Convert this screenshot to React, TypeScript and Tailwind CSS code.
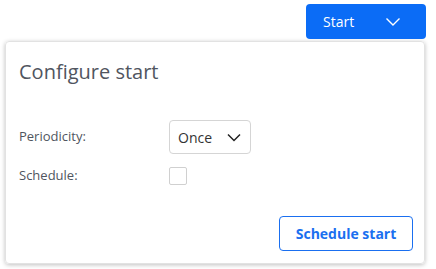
import React from "react";

export default function App() {
  return (
    <div className="w-[436px] h-[269px] bg-white relative" style={{ fontFamily: '"Open Sans", sans-serif' }}>
      <div className="flex justify-end pr-[10px] pt-[4px]">
        <button className="w-[120px] h-[35px] bg-[#0b6cf6] rounded-[4px] text-white text-[14px] flex items-center pl-[17px]">
          <span>Start</span>
          <svg className="ml-[31px]" width="16" height="10" viewBox="0 0 16 10" fill="none">
            <path d="M1.5 1.5 L8 8 L14.5 1.5" stroke="white" strokeWidth="1.4" />
          </svg>
        </button>
      </div>
      <div className="ml-[5px] mt-[2px] w-[420px] h-[223px] border border-[#e2e2e2] rounded-[4px] shadow-[0_1px_4px_rgba(0,0,0,0.25)] flex flex-col pl-[13px] pr-[11px]">
        <div className="text-[20px] text-[#505560] mt-[16px] leading-[28px]">Configure start</div>
        <div className="mt-[34px] flex items-center">
          <div className="w-[150px] text-[13px] text-[#505560]">Periodicity:</div>
          <div className="w-[82px] h-[34px] border border-[#d5d5d5] rounded-[4px] flex items-center pl-[8px] text-[14px] text-[#333]">
            <span>Once</span>
            <svg className="ml-[15px]" width="14" height="9" viewBox="0 0 14 9" fill="none">
              <path d="M1 1.5 L7 7.5 L13 1.5" stroke="#222" strokeWidth="1.5" />
            </svg>
          </div>
        </div>
        <div className="mt-[12px] flex items-center">
          <div className="w-[150px] text-[13px] text-[#505560]">Schedule:</div>
          <div className="w-[18px] h-[18px] border border-[#d0d0d0] rounded-[2px]" />
        </div>
        <div className="mt-auto mb-[12px] flex justify-end">
          <button className="w-[134px] h-[35px] border border-[#1a6ff0] rounded-[4px] text-[#1a6ff0] text-[14px] font-bold">
            Schedule start
          </button>
        </div>
      </div>
    </div>
  );
}
